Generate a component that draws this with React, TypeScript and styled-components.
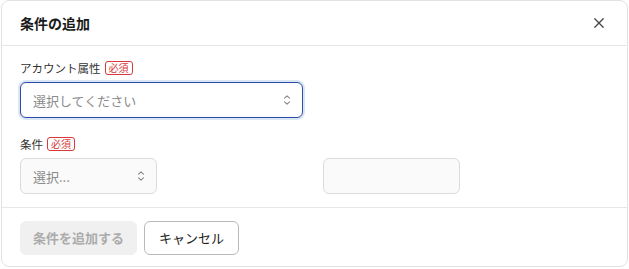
import React from "react";
import styled, { createGlobalStyle } from "styled-components";

const Global = createGlobalStyle`
  html, body { margin: 0; padding: 0; background: #ffffff; }
  body { font-family: "Noto Sans CJK JP", "Noto Sans", sans-serif; color: #333; }
  * { box-sizing: border-box; }
`;

const Dialog = styled.div`
  margin-left: 1px;
  width: 627px;
  height: 267px;
  border: 1px solid #e2e2e2;
  border-radius: 8px;
  background: #fff;
  display: flex;
  flex-direction: column;
  overflow: hidden;
`;

const Header = styled.div`
  height: 45px;
  display: flex;
  align-items: center;
  justify-content: space-between;
  padding: 0 20px 0 18px;
  border-bottom: 1px solid #e6e6e6;
`;

const Title = styled.h2`
  margin: 0;
  font-size: 14px;
  font-weight: 700;
  color: #1a1a1a;
`;

const CloseButton = styled.button`
  border: none;
  background: none;
  padding: 0;
  width: 16px;
  height: 16px;
  display: flex;
  align-items: center;
  justify-content: center;
  color: #444;
  cursor: pointer;
`;

const Body = styled.div`
  flex: 1;
  padding: 14px 18px 0;
  display: flex;
  flex-direction: column;
  gap: 18px;
`;

const Field = styled.div`
  display: flex;
  flex-direction: column;
  gap: 6px;
`;

const Label = styled.div`
  display: flex;
  align-items: center;
  gap: 4px;
  font-size: 11.5px;
  color: #333;
  height: 16px;
`;

const Required = styled.span`
  display: inline-flex;
  align-items: center;
  height: 14px;
  padding: 0 3px;
  border: 1px solid #d83a3a;
  border-radius: 3px;
  color: #d83a3a;
  font-size: 10px;
  line-height: 1;
`;

const SelectBox = styled.div<{ $width: number; $focused?: boolean }>`
  width: ${(p) => p.$width}px;
  height: 36px;
  border-radius: 6px;
  border: ${(p) => (p.$focused ? "1.5px solid #2c4aa8" : "1px solid #dcdcdc")};
  box-shadow: ${(p) => (p.$focused ? "0 0 0 2px #dbe6f3" : "none")};
  background: ${(p) => (p.$focused ? "#fff" : "#fafafa")};
  display: flex;
  align-items: center;
  justify-content: space-between;
  padding: 0 11px 0 12px;
  font-size: 13px;
  color: #8a8a8a;
`;

const Row = styled.div`
  display: grid;
  grid-template-columns: 137px 137px 137px;
  column-gap: 14.5px;
`;

const InputBox = styled.div`
  grid-column: 3;
  height: 36px;
  border-radius: 6px;
  border: 1px solid #dcdcdc;
  background: #fafafa;
`;

const Footer = styled.div`
  height: 59px;
  border-top: 1px solid #e6e6e6;
  display: flex;
  align-items: center;
  gap: 7px;
  padding: 1px 18px 0;
`;

const Button = styled.button<{ $variant: "disabled" | "outline" }>`
  height: 34px;
  border-radius: 6px;
  font-family: inherit;
  font-size: 13px;
  padding: 0 ${(p) => (p.$variant === "disabled" ? 12 : 14)}px;
  font-weight: ${(p) => (p.$variant === "disabled" ? 700 : 400)};
  color: ${(p) => (p.$variant === "disabled" ? "#ababab" : "#222")};
  background: ${(p) => (p.$variant === "disabled" ? "#f0f0f0" : "#fff")};
  border: ${(p) => (p.$variant === "disabled" ? "1px solid #f0f0f0" : "1px solid #b9b9b9")};
`;

const Chevron = () => (
  <svg width="8" height="12" viewBox="0 0 8 12" fill="none" stroke="#888" strokeWidth="1.1" strokeLinecap="round" strokeLinejoin="round">
    <path d="M1.5 4.2 L4 1.8 L6.5 4.2" />
    <path d="M1.5 7.8 L4 10.2 L6.5 7.8" />
  </svg>
);

export default function App() {
  return (
    <>
      <Global />
      <Dialog>
        <Header>
          <Title>条件の追加</Title>
          <CloseButton aria-label="close">
            <svg width="12" height="12" viewBox="0 0 12 12" stroke="#444" strokeWidth="1.3" strokeLinecap="round">
              <path d="M1.8 1.8 L10.2 10.2 M10.2 1.8 L1.8 10.2" />
            </svg>
          </CloseButton>
        </Header>
        <Body>
          <Field>
            <Label>
              アカウント属性<Required>必須</Required>
            </Label>
            <SelectBox $width={283} $focused>
              <span>選択してください</span>
              <Chevron />
            </SelectBox>
          </Field>
          <Field>
            <Label>
              条件<Required>必須</Required>
            </Label>
            <Row>
              <SelectBox $width={137}>
                <span>選択...</span>
                <Chevron />
              </SelectBox>
              <InputBox />
            </Row>
          </Field>
        </Body>
        <Footer>
          <Button $variant="disabled" disabled>条件を追加する</Button>
          <Button $variant="outline">キャンセル</Button>
        </Footer>
      </Dialog>
    </>
  );
}
